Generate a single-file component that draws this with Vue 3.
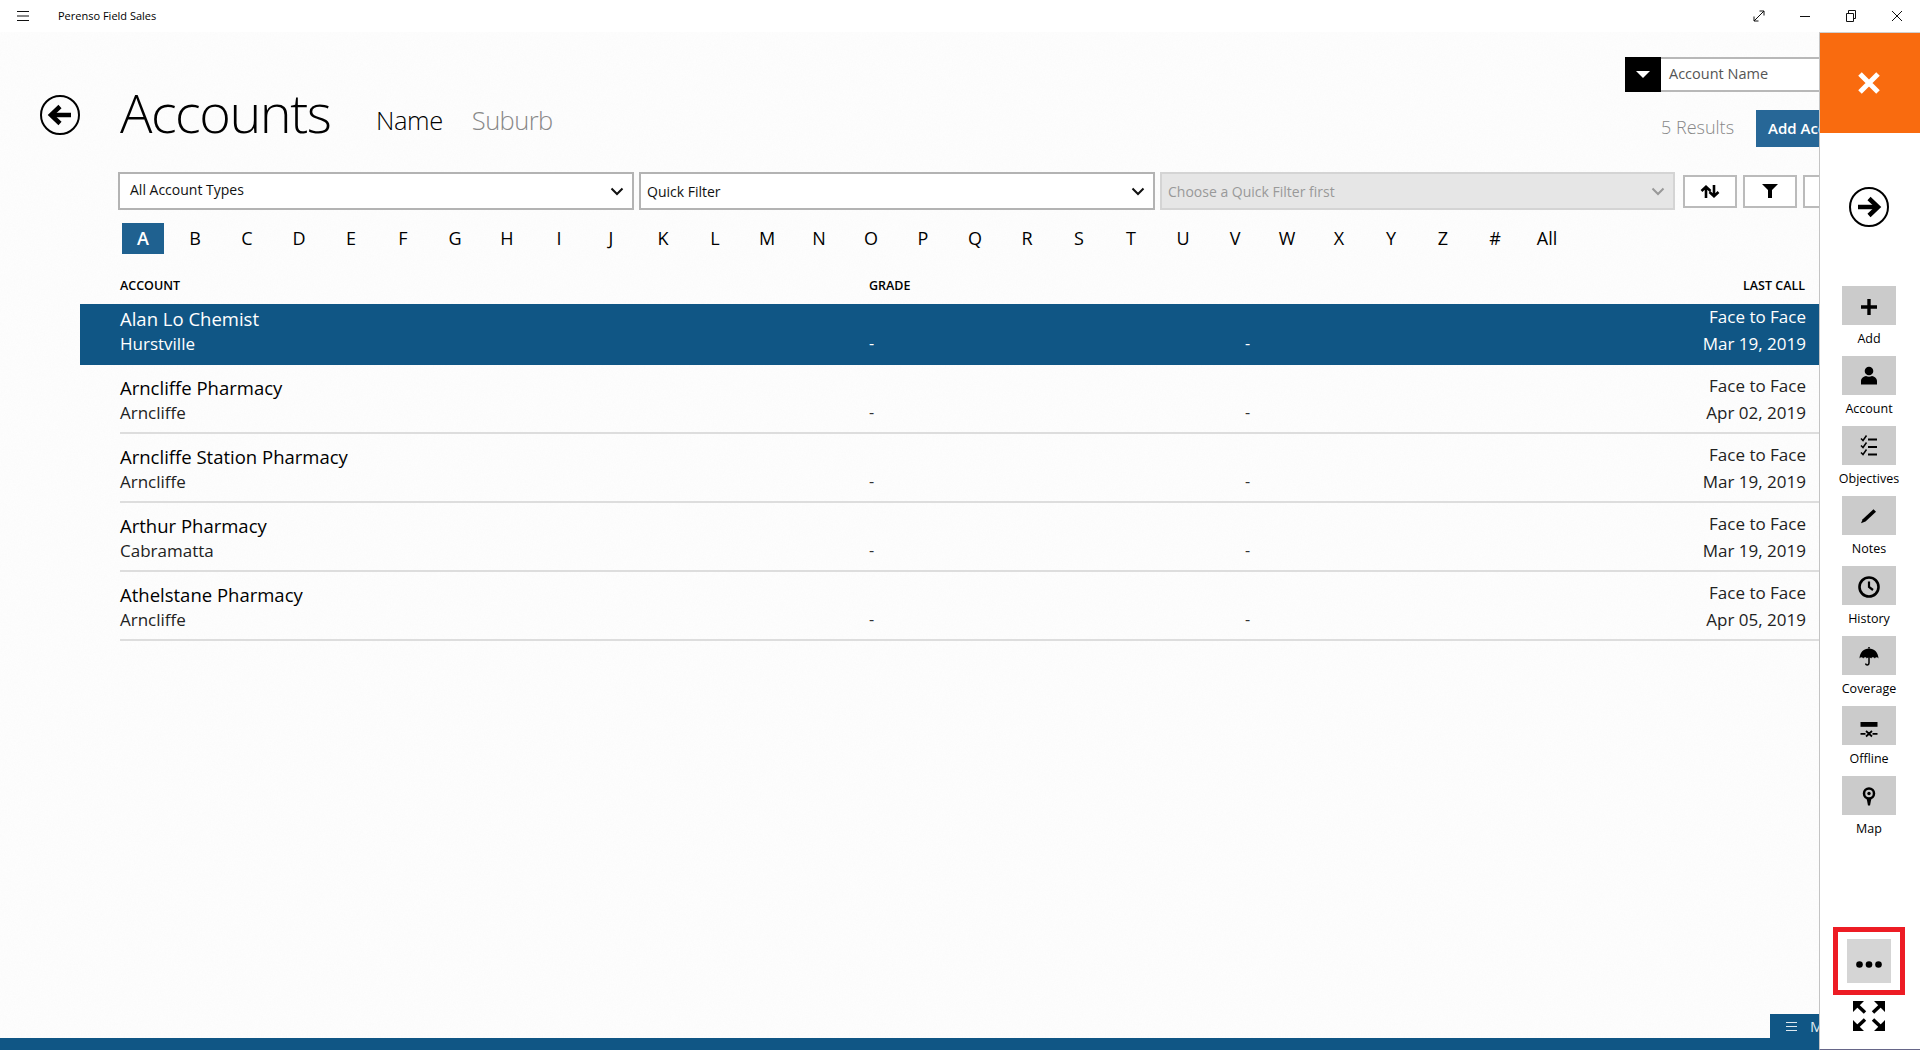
<script setup>
const letters = [...'ABCDEFGHIJKLMNOPQRSTUVWXYZ#'].concat('All')
const rows = [
  { name: 'Alan Lo Chemist', suburb: 'Hurstville', date: 'Mar 19, 2019', selected: true },
  { name: 'Arncliffe Pharmacy', suburb: 'Arncliffe', date: 'Apr 02, 2019' },
  { name: 'Arncliffe Station Pharmacy', suburb: 'Arncliffe', date: 'Mar 19, 2019' },
  { name: 'Arthur Pharmacy', suburb: 'Cabramatta', date: 'Mar 19, 2019' },
  { name: 'Athelstane Pharmacy', suburb: 'Arncliffe', date: 'Apr 05, 2019' },
]
const tools = [
  { label: 'Add', key: 'add' },
  { label: 'Account', key: 'account' },
  { label: 'Objectives', key: 'objectives' },
  { label: 'Notes', key: 'notes' },
  { label: 'History', key: 'history' },
  { label: 'Coverage', key: 'coverage' },
  { label: 'Offline', key: 'offline' },
  { label: 'Map', key: 'map' },
]
</script>

<template>
  <div class="app">
    <header class="titlebar">
      <svg class="burger" width="12" height="12" viewBox="0 0 12 12"><path d="M0 1.5h12M0 6h12M0 10.5h12" stroke="#111" stroke-width="1"/></svg>
      <span class="app-name">Perenso Field Sales</span>
      <div class="win-controls">
        <svg width="12" height="12" viewBox="0 0 12 12" fill="none" stroke="#111"><path d="M1 11 11 1M6.5 1H11v4.5M1 6.5V11h4.5"/></svg>
        <svg width="12" height="12" viewBox="0 0 12 12" fill="none" stroke="#111"><path d="M1 6.5h10"/></svg>
        <svg width="12" height="12" viewBox="0 0 12 12" fill="none" stroke="#111"><path d="M1.5 3.5h7v8h-7zM3.5 3.5v-3h7v8h-2"/></svg>
        <svg width="12" height="12" viewBox="0 0 12 12" fill="none" stroke="#111"><path d="M1 1l10 10M11 1 1 11"/></svg>
      </div>
    </header>

    <div class="stage">
      <div class="left">
        <main class="content">
          <section class="head">
            <svg class="back" width="40" height="40" viewBox="0 0 40 40" fill="none" stroke="#000">
              <circle cx="20" cy="20" r="19" stroke-width="2"/>
              <path d="M31 20H12" stroke-width="4.5"/><path d="M20 11.5 11 20l9 8.5" stroke-width="4.5"/>
            </svg>
            <h1 class="title">Accounts</h1>
            <span class="tab active">Name</span>
            <span class="tab">Suburb</span>
            <div class="head-right">
              <div class="search">
                <span class="search-drop"><i></i></span>
                <span class="search-input">Account Name</span>
              </div>
              <div class="result-row">
                <span class="results">5 Results</span>
                <span class="add-btn">Add Account</span>
              </div>
            </div>
          </section>

          <section class="filters">
            <div class="select first"><span>All Account Types</span>
              <svg width="14" height="9" viewBox="0 0 14 9" fill="none" stroke="#111" stroke-width="2"><path d="M1.5 1.5 7 7l5.5-5.5"/></svg>
            </div>
            <div class="select"><span>Quick Filter</span>
              <svg width="14" height="9" viewBox="0 0 14 9" fill="none" stroke="#111" stroke-width="2"><path d="M1.5 1.5 7 7l5.5-5.5"/></svg>
            </div>
            <div class="select disabled"><span>Choose a Quick Filter first</span>
              <svg width="14" height="9" viewBox="0 0 14 9" fill="none" stroke="#999" stroke-width="2"><path d="M1.5 1.5 7 7l5.5-5.5"/></svg>
            </div>
            <div class="sq-btns">
              <span class="sq">
                <svg width="20" height="13" viewBox="0 0 20 13" fill="none" stroke="#000" stroke-width="2.600"><path d="M6 13V2M1.500 6 6 1.800 10.500 6M14 0v11M9.500 7 14 11.200 18.500 7"/></svg>
              </span>
              <span class="sq">
                <svg width="16" height="14" viewBox="0 0 16 14"><path d="M0 0h16L10 6v8H6V6z" fill="#000"/></svg>
              </span>
              <span class="sq"></span>
            </div>
          </section>

          <nav class="alpha">
            <span v-for="l in letters" :key="l" class="letter" :class="{ on: l === 'A' }">{{ l }}</span>
          </nav>

          <div class="thead">
            <span>ACCOUNT</span><span>GRADE</span><span></span><span class="r">LAST CALL</span>
          </div>

          <div class="rows">
            <div v-for="r in rows" :key="r.name" class="row" :class="{ sel: r.selected }">
              <div class="cell-name"><div class="nm">{{ r.name }}</div><div class="sb">{{ r.suburb }}</div></div>
              <div class="dash">-</div>
              <div class="dash">-</div>
              <div class="cell-last"><div>Face to Face</div><div>{{ r.date }}</div></div>
            </div>
          </div>

          <div class="menu-tab-wrap">
            <span class="menu-tab">
              <svg width="11" height="11" viewBox="0 0 11 11"><path d="M0 1.500h11M0 5.500h11M0 9.500h11" stroke="#dfe9f0" stroke-width="1"/></svg>
              <b>Menu</b>
            </span>
          </div>
        </main>
        <div class="bottom"></div>
      </div>

      <aside class="side">
        <div class="close-box">
          <svg width="22" height="22" viewBox="0 0 22 22" stroke="#fff" stroke-width="5"><path d="M2 2l18 18M20 2 2 20"/></svg>
        </div>
        <svg class="forward" width="40" height="40" viewBox="0 0 40 40" fill="none" stroke="#000">
          <circle cx="20" cy="20" r="19" stroke-width="2"/>
          <path d="M9 20h19" stroke-width="4.500"/><path d="M20 11.500 29 20l-9 8.500" stroke-width="4.500"/>
        </svg>
        <div class="tools">
          <div v-for="t in tools" :key="t.key" class="tool">
            <span class="tool-box">
              <svg width="24" height="24" viewBox="0 0 24 24">
                <path v-if="t.key === 'add'" d="M10.300 5h3.400v6.300H20v3.400h-6.300V21h-3.400v-6.300H4v-3.400h6.300z" fill="#000"/>
                <g v-else-if="t.key === 'account'" fill="#000">
                  <circle cx="12" cy="7" r="4.300"/>
                  <path d="M4 20.500v-3.500c0-3 3-4.500 5-5 1.500 1 4.500 1 6 0 2 .5 5 2 5 5v3.500z"/>
                </g>
                <g v-else-if="t.key === 'objectives'" fill="none" stroke="#000">
                  <path d="M4 4.500 6 6.500 9.500 1.500M4 11.500l2 2 3.500-5M4 18.500l2 2 3.500-5" stroke-width="1.500"/>
                  <path d="M11 5.500h9M11 13h9M11 20.500h9" stroke-width="2"/>
                </g>
                <path v-else-if="t.key === 'notes'" d="M16.500 5.200 19 7.700 8.500 17.500 4 19.300l1.700-4z" fill="#000"/>
                <g v-else-if="t.key === 'history'" fill="none" stroke="#000">
                  <circle cx="12" cy="13" r="9.500" stroke-width="2.600"/>
                  <path d="M12 7.500V13l4 3" stroke-width="2.200"/>
                </g>
                <g v-else-if="t.key === 'coverage'">
                  <path d="M2.500 14.500C2.800 8 7 4.500 12 4.500s9.200 3.500 9.500 10c-1-1.600-3-1.600-3.600 0-1-1.600-3.100-1.600-3.700 0-.8-1.200-3.600-1.200-4.400 0-.6-1.600-2.700-1.600-3.700 0-.6-1.600-2.600-1.600-3.600 0z" fill="#000"/>
                  <path d="M12 3v1.500" stroke="#000" stroke-width="1.500"/>
                  <path d="M12 13v6c0 2.500-3.300 2.500-3.300.5" fill="none" stroke="#000" stroke-width="1.500"/>
                </g>
                <g v-else-if="t.key === 'offline'">
                  <rect x="3.500" y="8" width="17" height="4.800" fill="#000"/>
                  <path d="M3.500 19.800h5M15.500 19.800h5M9 17l6 5.500M15 17l-6 5.500" fill="none" stroke="#000" stroke-width="1.800"/>
                </g>
                <g v-else>
                  <circle cx="12" cy="9.500" r="5" fill="none" stroke="#000" stroke-width="2.500"/>
                  <circle cx="12" cy="9.500" r="1.700" fill="#000"/>
                  <path d="M9.500 14h5l-1.500 7.500h-2z" fill="#000"/>
                </g>
              </svg>
            </span>
            <span class="tool-label">{{ t.label }}</span>
          </div>
        </div>
        <div class="more-frame">
          <span class="more">
            <svg width="26" height="7" viewBox="0 0 26 7" fill="#000"><circle cx="3.500" cy="3.500" r="3.300"/><circle cx="13" cy="3.500" r="3.300"/><circle cx="22.500" cy="3.500" r="3.300"/></svg>
          </span>
        </div>
        <svg class="expand" width="32" height="30" viewBox="0 0 32 30">
          <g fill="#000">
            <path d="M0 0h11L0 11zM32 0H21l11 11zM0 30h11L0 19zM32 30H21l11-11z"/>
          </g>
          <path d="M3 3l9 8.500M29 3l-9 8.500M3 27l9-8.500M29 27l-9-8.500" stroke="#000" stroke-width="3.500" fill="none"/>
        </svg>
      </aside>
    </div>
  </div>
</template>

<style>
html, body { margin: 0; background: #fff; }
</style>

<style scoped>
.app {
  width: 1920px; height: 1050px; display: flex; flex-direction: column;
  overflow: hidden; color: #000;
  font-family: "Open Sans", "Noto Sans", sans-serif;
}
.titlebar {
  height: 32px; flex: none; display: flex; align-items: center; background: #fff;
  padding-left: 17px; box-sizing: border-box;
}
.burger { flex: none; }
.app-name { margin: -1px 0 0 29px; font-size: 11px; }
.win-controls { margin-left: auto; display: flex; gap: 34px; padding-right: 17px; }
.stage { flex: 1; display: flex; min-height: 0; }
.left { width: 1819px; flex: none; display: flex; flex-direction: column; }
.content {
  flex: 1; min-height: 0; overflow: hidden; display: flex; flex-direction: column;
  background-color: #fdfdfd;
  background-image: url("data:image/svg+xml,%3Csvg xmlns='http://www.w3.org/2000/svg' width='256' height='256'%3E%3Cfilter id='n'%3E%3CfeTurbulence type='fractalNoise' baseFrequency='0.7' numOctaves='2' stitchTiles='stitch'/%3E%3CfeColorMatrix values='0 0 0 0 0.5 0 0 0 0 0.5 0 0 0 0 0.5 0 0 0 0.05 -0.012'/%3E%3C/filter%3E%3Crect width='256' height='256' filter='url(%23n)'/%3E%3C/svg%3E");
}
.bottom { height: 12px; flex: none; background: #105685; }

.head { display: flex; height: 140px; flex: none; box-sizing: border-box; padding: 0 0 0 40px; align-items: flex-start; }
.back { margin-top: 63px; flex: none; }
.title {
  margin: 44px 0 0 40px; font-size: 54px; line-height: 72px; font-weight: 300; width: 210px; white-space: nowrap;
  letter-spacing: -1.500px;
}
.tab { margin-top: 70px; font-size: 25.500px; line-height: 36px; font-weight: 300; color: #888; margin-left: 29px; white-space: nowrap; letter-spacing: -0.6px; }
.tab.active { color: #000; margin-left: 46px; letter-spacing: -0.4px; }
.head-right { margin-left: auto; width: 194px; flex: none; padding-top: 25px; display: flex; flex-direction: column; overflow: hidden; }
.search { display: flex; height: 35px; }
.search-drop { width: 36px; background: #000; display: flex; align-items: center; justify-content: center; flex: none; }
.search-drop i { border-left: 7px solid transparent; border-right: 7px solid transparent; border-top: 7px solid #fff; }
.search-input {
  flex: 1; background: #fff; border-top: 2px solid #b8b8b8; border-bottom: 2px solid #b8b8b8; box-sizing: border-box;
  display: flex; align-items: center; padding: 0 0 3px 8px; font-size: 14.500px; color: #555;
}
.result-row { display: flex; align-items: center; margin-top: 18px; height: 37px; padding-left: 36px; }
.results { font-size: 18px; font-weight: 300; color: #888; width: 95px; flex: none; white-space: nowrap; margin-top: -4px; }
.add-btn {
  width: 63px; flex: none; height: 37px; background: #276797; color: #fff; font-weight: 600; font-size: 15px;
  line-height: 37px; padding-left: 12px; box-sizing: border-box; white-space: nowrap; overflow: hidden;
}

.filters { display: flex; flex: none; height: 38px; padding-left: 118px; gap: 5px; }
.select {
  width: 516px; flex: none; height: 38px; box-sizing: border-box; border: 2px solid #b3b3b3; background: #fff;
  display: flex; align-items: center; justify-content: space-between; padding: 0 8px 0 6px; font-size: 14px; color: #111;
}
.select.first { padding-left: 10px; }
.select.first span { position: relative; top: -2px; }
.select.disabled { background: #e6e6e6; border-color: #d4d4d4; color: #999; width: 515px; }
.sq-btns { display: flex; gap: 6px; margin-left: 3px; align-items: center; }
.sq {
  width: 54px; height: 33px; box-sizing: border-box; border: 2px solid #bbb; background: #fff; flex: none;
  display: flex; align-items: center; justify-content: center;
}

.alpha { display: flex; flex: none; gap: 10px; padding-left: 122px; margin-top: 13px; height: 31px; }
.letter { width: 42px; flex: none; height: 31px; line-height: 30px; text-align: center; font-size: 18px; font-weight: 500; }
.letter.on { background: #1f6190; color: #fff; font-weight: 600; }

.thead {
  flex: none; margin-top: 23px; height: 18px; line-height: 18px; display: grid;
  grid-template-columns: 749px 376px 1fr 200px; padding: 0 14px 0 120px; font-size: 12.500px; font-weight: 600;
}
.thead .r { text-align: right; }
.rows { margin: 9px 0 0 80px; flex: none; display: flex; flex-direction: column; gap: 8px; }
.row {
  height: 61px; box-sizing: border-box; display: grid; grid-template-columns: 749px 376px 1fr 200px;
  margin-left: 40px; padding-right: 13px; border-bottom: 2px solid #ddd;
}
.row.sel { background: #105685; color: #fff; margin-left: 0; padding-left: 40px; border-bottom: none; }
.nm { font-size: 18.500px; line-height: 26px; margin-top: 2px; white-space: nowrap; }
.sb { font-size: 17px; line-height: 24px; color: #222; }
.sel .sb, .sel .dash { color: #fff; }
.dash { font-size: 16px; line-height: 24px; margin-top: 27px; color: #333; }
.cell-last { text-align: right; font-size: 17px; line-height: 27px; color: #222; margin-top: -1px; }
.sel .cell-last { color: #fff; }
.menu-tab-wrap { margin-top: auto; display: flex; justify-content: flex-end; flex: none; }
.menu-tab {
  width: 49px; height: 24px; background: #105685; color: #dfe9f0; display: flex; align-items: center; overflow: hidden;
  box-sizing: border-box; padding-left: 16px; font-size: 15px; gap: 13px;
}
.menu-tab svg, .menu-tab b { flex: none; }
.menu-tab b { font-weight: 400; }

.side {
  width: 101px; flex: none; box-sizing: border-box; border-left: 1px solid #c4c4c4; border-top: 1px solid #d0d0d0;
  border-bottom: 1px solid #668; background: #fff; display: flex; flex-direction: column; align-items: center; padding-right: 2px;
}
.close-box {
  width: calc(100% + 2px); margin-right: -2px; padding-right: 2px; box-sizing: border-box; height: 100px; background: #f96b0f;
  display: flex; align-items: center; justify-content: center; flex: none;
}
.forward { margin-top: 54px; flex: none; }
.tools { display: flex; flex-direction: column; margin-top: 59px; align-items: center; flex: none; }
.tool { height: 70px; display: flex; flex-direction: column; align-items: center; }
.tool-box { width: 54px; height: 39px; background: #cbcbcb; display: flex; align-items: center; justify-content: center; }
.tool-label { margin-top: 5px; font-size: 12.500px; line-height: 18px; white-space: nowrap; }
.more-frame {
  margin-top: auto; width: 72px; height: 68px; box-sizing: border-box; border: 5px solid #ed1c24; display: flex;
  align-items: center; justify-content: center; flex: none;
}
.more { width: 44px; height: 44px; background: #d5d5d5; display: flex; align-items: center; justify-content: center; padding-top: 6px; box-sizing: border-box; }
.expand { margin: 6px 0 18px; flex: none; }
</style>
